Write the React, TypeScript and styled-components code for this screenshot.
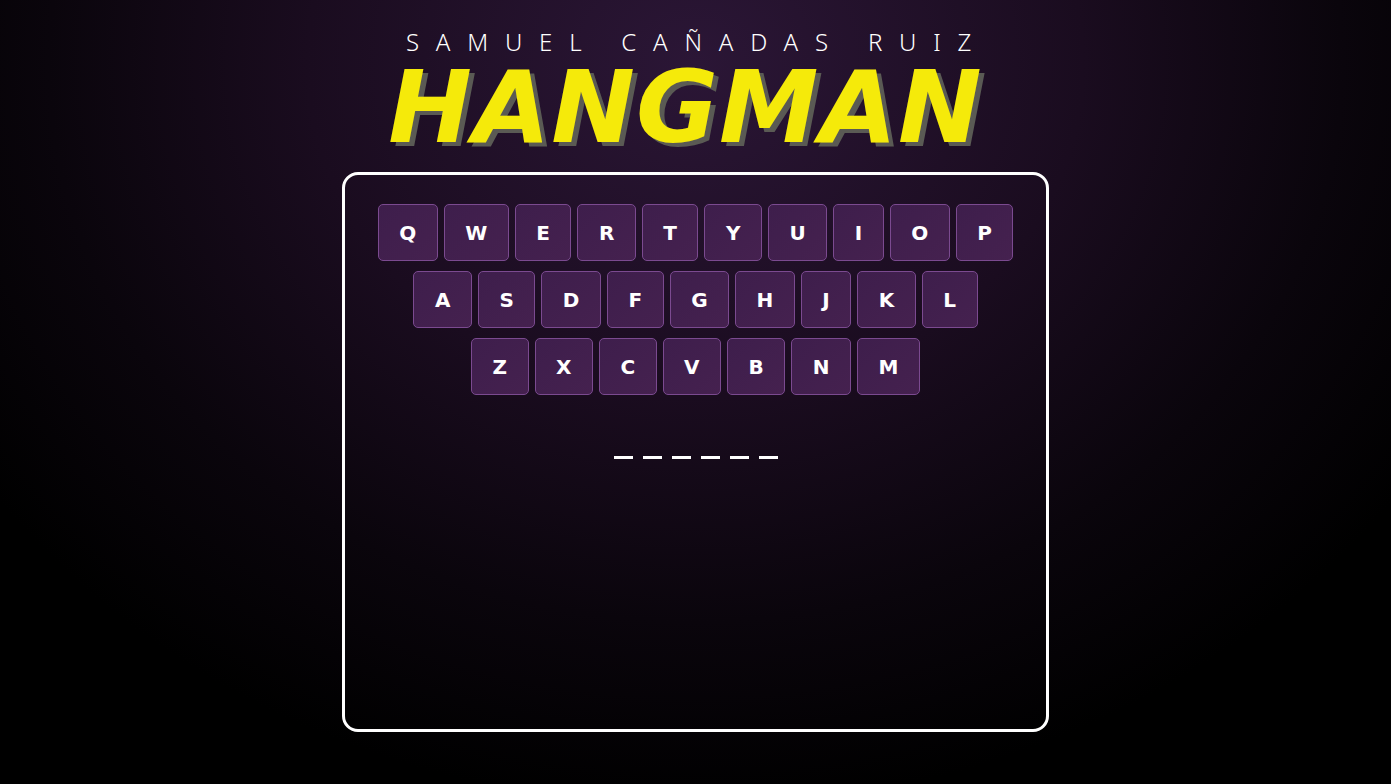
import React from 'react';
import styled, { createGlobalStyle } from 'styled-components';

const GlobalStyle = createGlobalStyle`
  *, *::before, *::after {
    box-sizing: border-box;
  }
  html, body {
    margin: 0;
    padding: 0;
  }
  body {
    min-height: 100vh;
    background: radial-gradient(ellipse 62% 95% at 50% 8%, #2b1636 0%, #1a0c1f 45%, #0a050c 75%, #000 100%);
    background-color: #000;
    font-family: "DejaVu Sans", "Liberation Sans", sans-serif;
    color: #fff;
  }
`;

const Page = styled.div`
  display: flex;
  flex-direction: column;
  align-items: center;
  height: 784px;
  overflow: hidden;
`;

const Author = styled.h2`
  margin: 30px 0 0;
  font-size: 24px;
  font-weight: 300;
  letter-spacing: 16.8px;
  line-height: 24px;
  padding-left: 3px;
  font-family: "Noto Sans", "Open Sans", sans-serif;
`;

const Title = styled.h1`
  margin: 4px 0 0;
  padding-right: 20px;
  font-size: 100px;
  line-height: 100px;
  font-weight: 700;
  font-style: italic;
  letter-spacing: 1px;
  color: #f5ea0a;
  text-shadow: 5px 4px 0 #5a5a54;
  font-family: "DejaVu Sans", "Liberation Sans", sans-serif;
`;

const Board = styled.main`
  margin-top: 14px;
  width: 707px;
  height: 560px;
  border: 3px solid #fff;
  border-radius: 16px;
  padding-top: 29px;
  display: flex;
  flex-direction: column;
  align-items: center;
`;

const Keyboard = styled.div`
  display: flex;
  flex-direction: column;
  align-items: center;
  gap: 10px;
`;

const KeyRow = styled.div`
  display: flex;
  gap: 6px;
`;

const Key = styled.button`
  height: 57px;
  padding: 0 20.5px;
  min-width: 50px;
  border: 1px solid #7b4a90;
  border-radius: 5px;
  background: linear-gradient(135deg, #3e1e4c 0%, #45214f 100%);
  color: #fff;
  font-family: "DejaVu Sans", sans-serif;
  font-size: 20px;
  font-weight: 700;
  cursor: pointer;
`;

const Word = styled.div`
  margin-top: 61px;
  display: flex;
  gap: 10px;
`;

const Slot = styled.span`
  width: 19px;
  height: 3px;
  background: #fff;
`;

const rows = ['QWERTYUIOP', 'ASDFGHJKL', 'ZXCVBNM'];

export default function App() {
  return (
    <>
      <GlobalStyle />
      <Page>
        <Author>SAMUEL CAÑADAS RUIZ</Author>
        <Title>HANGMAN</Title>
        <Board>
          <Keyboard>
            {rows.map(row => (
              <KeyRow key={row}>
                {row.split('').map(l => (
                  <Key key={l}>{l}</Key>
                ))}
              </KeyRow>
            ))}
          </Keyboard>
          <Word>
            {Array.from({ length: 6 }).map((_, i) => (
              <Slot key={i} />
            ))}
          </Word>
        </Board>
      </Page>
    </>
  );
}
